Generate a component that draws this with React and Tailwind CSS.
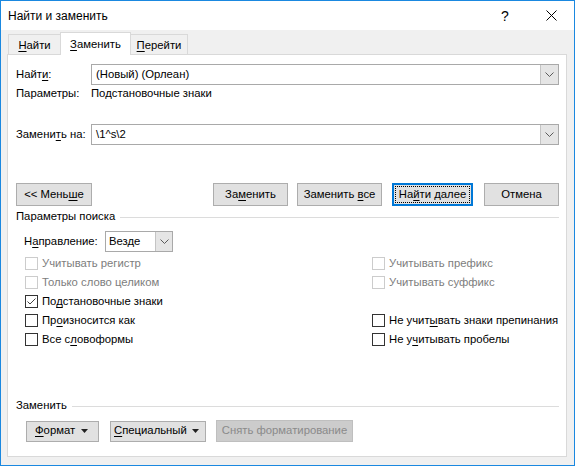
import React from "react";

const U = ({ children }) => <span className="underline underline-offset-[2px]">{children}</span>;

const Chevron = () => (
  <svg width="9" height="5" viewBox="0 0 9 5" fill="none">
    <polyline points="0.5,0.5 4.5,4.5 8.5,0.5" stroke="#5a5a5a" strokeWidth="1" />
  </svg>
);

const Tri = () => (
  <svg width="7" height="4" viewBox="0 0 7 4">
    <polygon points="0,0 7,0 3.5,4" fill="#222" />
  </svg>
);

const Combo = ({ value }) => (
  <div className="flex-1 h-[21px] flex border border-[#a9a9a9] bg-white">
    <div className="flex-1 flex items-center pl-[4px]">{value}</div>
    <div className="w-[18px] bg-[#e5e5e5] border-l border-[#c4c4c4] flex items-center justify-center">
      <Chevron />
    </div>
  </div>
);

const Btn = ({ className = "", children }) => (
  <div className={"h-[23px] border border-[#adadad] bg-[#e1e1e1] flex items-center justify-center " + className}>
    <span className="whitespace-nowrap">{children}</span>
  </div>
);

const Check = ({ checked, disabled, children }) => (
  <div className={"flex items-center gap-[4px] whitespace-nowrap " + (disabled ? "text-[#7d7d7d]" : "text-black")}>
    <div
      className={
        "w-[13px] h-[13px] shrink-0 border bg-white flex items-center justify-center " +
        (disabled ? "border-[#cccccc]" : "border-[#333333]")
      }
    >
      {checked && (
        <svg width="11" height="11" viewBox="0 0 11 11" fill="none">
          <polyline points="1.5,5.5 4,8 9.5,2.5" stroke="#444" strokeWidth="1" />
        </svg>
      )}
    </div>
    <span>{children}</span>
  </div>
);

const Row = ({ left, right }) => (
  <div className="h-[19px] flex items-center pl-[9px]">
    <div className="w-[347px] shrink-0">{left}</div>
    <div className="shrink-0">{right}</div>
  </div>
);

export default function App() {
  return (
    <div className="w-[582px] h-[476px] bg-white [font-family:'Liberation_Sans',Arial,sans-serif] text-[11.3px] text-black leading-none">
      <div className="w-[575px] h-[466px] border border-[#1a88e0] bg-[#f0f0f0] flex flex-col">
        {/* Title bar */}
        <div className="h-[29px] bg-white flex items-center shrink-0">
          <span className="ml-[7px] flex-1 text-[12px]">Найти и заменить</span>
          <div className="w-[46px] h-full flex items-center justify-center text-[14px]">?</div>
          <div className="w-[46px] h-full flex items-center justify-center">
            <svg width="11" height="11" viewBox="0 0 11 11" fill="none">
              <line x1="0.5" y1="0.5" x2="10.5" y2="10.5" stroke="#000" strokeWidth="1" />
              <line x1="10.5" y1="0.5" x2="0.5" y2="10.5" stroke="#000" strokeWidth="1" />
            </svg>
          </div>
        </div>

        {/* Body */}
        <div className="flex-1 flex flex-col pl-[6px] pr-[7px] pt-[2px] pb-[8px]">
          {/* Tabs */}
          <div className="h-[22px] flex items-start relative z-10">
            <div className="ml-[1px] mt-[2px] h-[20px] w-[52px] border-l border-t border-[#d9d9d9] bg-[#f0f0f0] flex items-center justify-center pt-[2px]">
              <span><U>Н</U>айти</span>
            </div>
            <div className="h-[23px] w-[71px] border-l border-t border-r border-[#d9d9d9] bg-white flex items-center justify-center pt-[1px]">
              <span><U>З</U>аменить</span>
            </div>
            <div className="mt-[2px] h-[20px] w-[57px] border-t border-r border-[#d9d9d9] bg-[#f0f0f0] flex items-center justify-center pt-[2px]">
              <span><U>П</U>ерейти</span>
            </div>
          </div>

          {/* Panel */}
          <div className="flex-1 bg-white border border-[#d9d9d9] pl-[8px] pr-[7px] pt-[9px] pb-[14px] flex flex-col">
            <div className="flex items-center">
              <div className="w-[75px]">Найт<U>и</U>:</div>
              <Combo value="(Новый) (Орлеан)" />
            </div>
            <div className="h-[18px] flex items-center">
              <div className="w-[75px]">Параметры:</div>
              <div>Подстановочные знаки</div>
            </div>
            <div className="mt-[21px] flex items-center">
              <div className="w-[75px]">Замени<U>т</U>ь на:</div>
              <Combo value={"\\1^s\\2"} />
            </div>

            {/* Buttons */}
            <div className="mt-[38px] flex items-center">
              <Btn className="w-[76px]">&lt;&lt; Мень<U>ш</U>е</Btn>
              <Btn className="w-[75px] ml-auto">За<U>м</U>енить</Btn>
              <Btn className="w-[85px] ml-[9px]">Заменить <U>в</U>се</Btn>
              <div className="w-[81px] ml-[10px] h-[23px] border-2 border-[#0078d7] bg-[#e1e1e1] flex">
                <div className="flex-1 m-[1px] border border-dotted border-black flex items-center justify-center">
                  <span className="whitespace-nowrap">На<U>й</U>ти далее</span>
                </div>
              </div>
              <Btn className="w-[75px] ml-[11px]">Отмена</Btn>
            </div>

            {/* Search params */}
            <div className="mt-[2px] h-[18px] flex items-center">
              <span>Параметры поиска</span>
              <div className="flex-1 h-px bg-[#dcdcdc] ml-[5px]" />
            </div>
            <div className="mt-[5px] pl-[8px] flex items-center">
              <div className="w-[81px]">Н<U>а</U>правление:</div>
              <div className="w-[68px] h-[21px] flex border border-[#a9a9a9] bg-white">
                <div className="flex-1 flex items-center pl-[3px]">Везде</div>
                <div className="w-[17px] bg-[#e5e5e5] border-l border-[#c4c4c4] flex items-center justify-center">
                  <Chevron />
                </div>
              </div>
            </div>
            <div className="mt-[2px] flex flex-col">
              <Row
                left={<Check disabled>Учитывать регистр</Check>}
                right={<Check disabled>Учитывать префикс</Check>}
              />
              <Row
                left={<Check disabled>Только слово целиком</Check>}
                right={<Check disabled>Учитывать суффикс</Check>}
              />
              <Row left={<Check checked>По<U>д</U>становочные знаки</Check>} right={null} />
              <Row
                left={<Check>Пр<U>о</U>износится как</Check>}
                right={<Check>Не учит<U>ы</U>вать знаки препинания</Check>}
              />
              <Row
                left={<Check>Все с<U>л</U>овоформы</Check>}
                right={<Check>Не у<U>ч</U>итывать пробелы</Check>}
              />
            </div>

            {/* Replace section */}
            <div className="mt-auto h-[18px] flex items-center">
              <span>Заменить</span>
              <div className="flex-1 h-px bg-[#dcdcdc] ml-[5px]" />
            </div>
            <div className="mt-[5px] pl-[10px] flex items-center">
              <div className="w-[73px] h-[21px] border border-[#adadad] bg-[#e1e1e1] flex items-center justify-between pl-[8px] pr-[10px]">
                <span><U>Ф</U>ормат</span>
                <Tri />
              </div>
              <div className="w-[96px] ml-[11px] h-[21px] border border-[#adadad] bg-[#e1e1e1] flex items-center justify-between pl-[3px] pr-[6px]">
                <span><U>С</U>пециальный</span>
                <Tri />
              </div>
              <div className="w-[137px] ml-[10px] h-[22px] border border-[#bfbfbf] bg-[#cccccc] flex items-center justify-center text-[#8a8a8a] whitespace-nowrap">
                Снять форматирование
              </div>
            </div>
          </div>
        </div>
      </div>
    </div>
  );
}
